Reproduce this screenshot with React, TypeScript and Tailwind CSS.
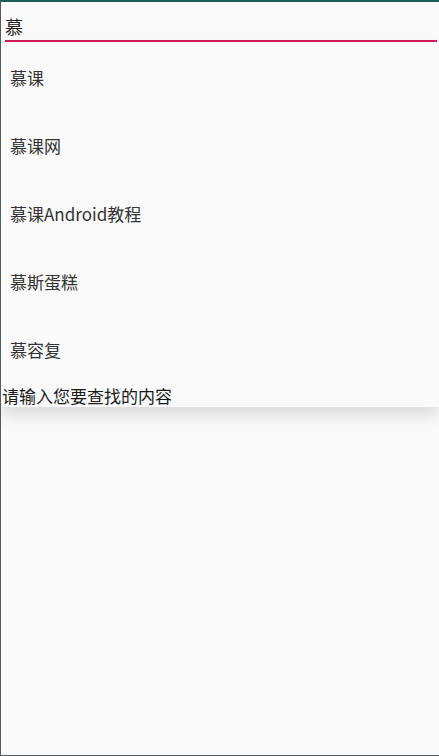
const suggestions = ["慕课", "慕课网", "慕课Android教程", "慕斯蛋糕", "慕容复"];

export default function App() {
  return (
    <div
      className="w-[439px] h-[756px] bg-[#fafafa] border-t-2 border-t-[#1e5f55] border-l border-l-[#555a5c] border-b border-b-[#555a5c] overflow-hidden"
      style={{ fontFamily: '"Noto Sans CJK SC", "Noto Sans", sans-serif' }}
    >
      {/* Search field */}
      <div className="pl-[4px] pr-[2px] h-[40px] flex flex-col justify-end">
        <div className="flex-1 flex items-end pb-[2px]">
          <span className="text-[18px] leading-[24px] text-[#222]">慕</span>
        </div>
        <div className="h-[2px] bg-[#d21d58]" />
      </div>

      {/* Suggestion dropdown */}
      <div className="relative bg-[#fafafa] shadow-[0_8px_16px_rgba(0,0,0,0.13)] pt-[2px]">
        {suggestions.map((s) => (
          <div key={s} className="h-[68px] flex items-center pl-[9px]">
            <span className="text-[17px] text-[#333]">{s}</span>
          </div>
        ))}
        <div className="h-[23px] flex items-center pl-[1px]">
          <span className="text-[17px] leading-[20px] text-[#1a1a1a]">请输入您要查找的内容</span>
        </div>
      </div>
    </div>
  );
}
